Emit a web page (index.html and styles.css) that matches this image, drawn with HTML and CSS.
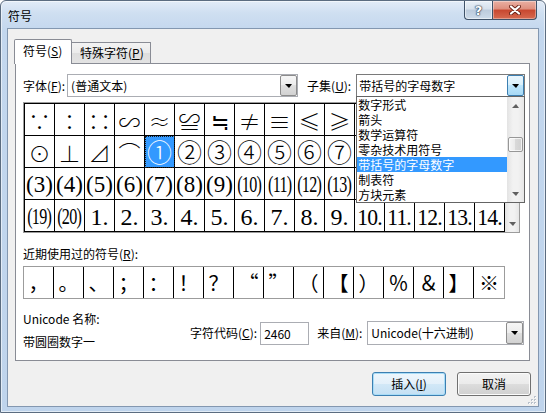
FILE: index.html
```html
<!DOCTYPE html>
<html lang="zh-CN">
<head>
<meta charset="utf-8">
<title>符号</title>
<link rel="stylesheet" href="styles.css">
</head>
<body>
<div class="window">
  <div class="titlebar">
    <span class="title">符号</span>
    <div class="tbtns">
      <div class="tbtn help">?</div>
      <div class="tbtn close">
        <svg width="12" height="10" viewBox="0 0 12 10"><path d="M2 1.5L10 8.5M10 1.5L2 8.5" stroke="#6b2418" stroke-width="4" stroke-linecap="round"/><path d="M2 1.5L10 8.5M10 1.5L2 8.5" stroke="#fff" stroke-width="2.2" stroke-linecap="round"/></svg>
      </div>
    </div>
  </div>
  <div class="client">
    <div class="tabs">
      <div class="tab active">符号(<u>S</u>)</div>
      <div class="tab">特殊字符(<u>P</u>)</div>
    </div>
    <div class="panel">
      <div class="row-font">
        <span class="lbl">字体(<u>F</u>):</span>
        <div class="combo font-combo"><span class="val">(普通文本)</span><span class="dd"><i class="tri"></i></span></div>
        <span class="lbl subset-lbl">子集(<u>U</u>):</span>
        <div class="combo subset-combo"><span class="val">带括号的字母数字</span><span class="dd hot"><i class="tri"></i></span>
          <div class="droplist">
            <div class="items">
              <div class="item">数字形式</div>
              <div class="item">箭头</div>
              <div class="item">数学运算符</div>
              <div class="item">零杂技术用符号</div>
              <div class="item sel">带括号的字母数字</div>
              <div class="item">制表符</div>
              <div class="item">方块元素</div>
            </div>
            <div class="vscroll list-scroll">
              <span class="arr"><i class="tri-up"></i></span>
              <span class="thumb"></span>
              <span class="spacer"></span>
              <span class="arr"><i class="tri-down"></i></span>
            </div>
          </div>
        </div>
      </div>
      <div class="grid">
        <div class="cells">
          <span class="cell">∵</span><span class="cell">∶</span><span class="cell">∷</span><span class="cell">∽</span><span class="cell">≈</span><span class="cell">≌</span><span class="cell">≒</span><span class="cell">≠</span><span class="cell">≡</span><span class="cell">≤</span><span class="cell">≥</span><span class="cell"></span><span class="cell"></span><span class="cell"></span><span class="cell"></span><span class="cell"></span>
          <span class="cell big">⊙</span><span class="cell big">⊥</span><span class="cell big">⊿</span><span class="cell big">⌒</span><span class="cell circ sel">①</span><span class="cell circ">②</span><span class="cell circ">③</span><span class="cell circ">④</span><span class="cell circ">⑤</span><span class="cell circ">⑥</span><span class="cell circ">⑦</span><span class="cell"></span><span class="cell"></span><span class="cell"></span><span class="cell"></span><span class="cell"></span>
          <span class="cell par">(3)</span><span class="cell par">(4)</span><span class="cell par">(5)</span><span class="cell par">(6)</span><span class="cell par">(7)</span><span class="cell par">(8)</span><span class="cell par">(9)</span><span class="cell par"><b class="sq">(10)</b></span><span class="cell par"><b class="sq">(11)</b></span><span class="cell par"><b class="sq">(12)</b></span><span class="cell par"><b class="sq">(13)</b></span><span class="cell"></span><span class="cell"></span><span class="cell"></span><span class="cell"></span><span class="cell"></span>
          <span class="cell par"><b class="sq">(19)</b></span><span class="cell par"><b class="sq">(20)</b></span><span class="cell num">1.</span><span class="cell num">2.</span><span class="cell num">3.</span><span class="cell num">4.</span><span class="cell num">5.</span><span class="cell num">6.</span><span class="cell num">7.</span><span class="cell num">8.</span><span class="cell num">9.</span><span class="cell num"><b class="sq2">10.</b></span><span class="cell num"><b class="sq2">11.</b></span><span class="cell num"><b class="sq2">12.</b></span><span class="cell num"><b class="sq2">13.</b></span><span class="cell num"><b class="sq2">14.</b></span>
        </div>
        <div class="vscroll grid-scroll">
          <span class="arr"><i class="tri-up"></i></span>
          <span class="spacer"></span>
          <span class="arr"><i class="tri-down"></i></span>
        </div>
      </div>
      <div class="recent-lbl">近期使用过的符号(<u>R</u>):</div>
      <div class="recent">
        <span class="rc">，</span><span class="rc">。</span><span class="rc">、</span><span class="rc">；</span><span class="rc">：</span><span class="rc">！</span><span class="rc">？</span><span class="rc">“</span><span class="rc">”</span><span class="rc">（</span><span class="rc">【</span><span class="rc">）</span><span class="rc">％</span><span class="rc">＆</span><span class="rc">】</span><span class="rc">※</span>
      </div>
      <div class="info">
        <div class="names">
          <div>Unicode 名称:</div>
          <div class="name2">带圆圈数字一</div>
        </div>
        <span class="lbl shift">字符代码(<u>C</u>):</span>
        <div class="input shift">2460</div>
        <span class="lbl from-lbl shift">来自(<u>M</u>):</span>
        <div class="combo from-combo shift"><span class="val">Unicode(十六进制)</span><span class="dd"><i class="tri"></i></span></div>
      </div>
    </div>
    <div class="buttons">
      <div class="btn default">插入(<u>I</u>)</div>
      <div class="btn">取消</div>
    </div>
    <svg class="grip" width="11" height="11" viewBox="0 0 11 11">
      <g fill="#b9c1cb"><rect x="8" y="2" width="2" height="2"/><rect x="5" y="5" width="2" height="2"/><rect x="8" y="5" width="2" height="2"/><rect x="2" y="8" width="2" height="2"/><rect x="5" y="8" width="2" height="2"/><rect x="8" y="8" width="2" height="2"/></g>
      <g fill="#fff"><rect x="9" y="3" width="1" height="1"/><rect x="6" y="6" width="1" height="1"/><rect x="9" y="6" width="1" height="1"/><rect x="3" y="9" width="1" height="1"/><rect x="6" y="9" width="1" height="1"/><rect x="9" y="9" width="1" height="1"/></g>
    </svg>
  </div>
</div>
</body>
</html>
```
FILE: styles.css
```css
* { box-sizing: border-box; }
html, body { margin: 0; padding: 0; }
body {
  width: 546px; height: 413px; overflow: hidden;
  font-family: "Noto Sans CJK SC", "Noto Sans", sans-serif;
  font-size: 12px; line-height: 16px; color: #000; background: #fff;
}
u { text-decoration: underline; text-underline-offset: 1px; }
b { font-weight: normal; }

.window {
  width: 546px; height: 413px;
  border: 1px solid #5b6c80; border-radius: 6px 6px 0 0;
  background: linear-gradient(180deg, #e2ecf7 0, #cfdff1 12px, #c3d7ee 30px, #bfd4ec 100%);
  display: flex; flex-direction: column; overflow: hidden;
  box-shadow: inset 0 0 0 1px rgba(255,255,255,0.55);
}
.titlebar {
  height: 27px; flex: none;
  display: flex; justify-content: space-between; align-items: flex-start;
  padding: 0 8px 0 7px;
}
.title { margin-top: 7px; line-height: 16px; }
.tbtns { display: flex; }
.tbtn {
  height: 19px; border: 1px solid #3f5268; border-top: none;
  display: flex; align-items: center; justify-content: center;
}
.help {
  width: 28px; border-right: none; border-radius: 0 0 0 4px;
  background: linear-gradient(180deg, #e9f0f7 0, #d6e1ec 45%, #bccbdc 50%, #cddbe9 100%);
  color: #fff; font: bold 13px/1 "DejaVu Sans", sans-serif;
  text-shadow: 0 0 1px #23374f, 0 0 1px #23374f, 0 0 2px #23374f;
  box-shadow: inset 0 0 0 1px rgba(255,255,255,0.5);
}
.close {
  width: 45px; border-radius: 0 0 4px 0;
  background: linear-gradient(180deg, #eab0a3 0, #de8e7d 45%, #c8472f 50%, #d66a50 100%);
  box-shadow: inset 0 0 0 1px rgba(255,255,255,0.35);
}

.client {
  flex: 1; margin: 0 6px 5px; position: relative;
  border: 1px solid #8397b0; background: #f0f0f0;
}
.tabs { display: flex; align-items: flex-start; margin-top: 10px; padding-left: 6px; height: 24px; }
.tab {
  height: 21px; margin-top: 3px; padding: 0 0 0 8px; width: 79px;
  border: 1px solid #898c95; border-bottom: none; border-left: none;
  background: linear-gradient(180deg, #f3f3f3 0, #ebebeb 50%, #dedede 50%, #e3e3e3 100%);
  line-height: 19px; white-space: nowrap;
}
.tab.active {
  width: 58px; height: 25px; margin-top: 0; padding-left: 8px;
  border-left: 1px solid #898c95; border-radius: 2px 2px 0 0;
  background: #fff; position: relative; z-index: 1; line-height: 22px;
}
.panel {
  margin-left: 7px; width: 515px; height: 298px;
  border: 1px solid #898c95; background: #fff;
  padding: 10px 0 0 7px;
}
.row-font { display: flex; align-items: center; height: 23px; }
.lbl { flex: none; white-space: nowrap; }
.combo {
  position: relative; display: flex; height: 23px; flex: none;
  border: 1px solid #abadb3; background: #fff;
}
.combo .val { flex: 1; padding-left: 3px; line-height: 21px; white-space: nowrap; overflow: hidden; }
.combo .dd {
  width: 17px; flex: none; border: 1px solid #8c8c8c; border-radius: 2px;
  background: linear-gradient(180deg, #f6f6f6 0, #ececec 50%, #dfdfdf 50%, #d2d2d2 100%);
  display: flex; align-items: center; justify-content: center;
}
.combo .dd.hot {
  border-color: #3c7fb1;
  background: linear-gradient(180deg, #eaf6fd 0, #d9f0fc 50%, #bee6fd 50%, #a7d9f5 100%);
}
.tri { width: 0; height: 0; border-left: 4px solid transparent; border-right: 3px solid transparent; border-top: 4px solid #000; }
.font-combo { margin-left: 2px; width: 231px; }
.subset-lbl { margin-left: 9px; }
.subset-combo { margin-left: 5px; width: 169px; border-color: #7a7a7a; }
.subset-combo .val { padding-left: 2px; }

.droplist {
  position: absolute; top: 100%; left: -1px; width: 169px; height: 107px;
  border: 1px solid #646464; background: #fff; display: flex; z-index: 5;
}
.items { flex: 1; }
.item { height: 15px; line-height: 15px; padding-left: 1px; white-space: nowrap; overflow: hidden; }
.item.sel { background: #3399ff; color: #fff; }

.vscroll {
  flex: none; display: flex; flex-direction: column; align-items: center;
  background: linear-gradient(90deg, #e3e3e3 0, #f2f2f2 35%, #f2f2f2 65%, #e6e6e6 100%);
}
.list-scroll { width: 17px; }
.grid-scroll { width: 14px; }
.vscroll .arr { height: 17px; width: 100%; display: flex; align-items: center; justify-content: center; flex: none; }
.vscroll .spacer { flex: 1; }
.tri-up { width: 0; height: 0; border-left: 4px solid transparent; border-right: 3px solid transparent; border-bottom: 4px solid #606060; }
.tri-down { width: 0; height: 0; border-left: 4px solid transparent; border-right: 3px solid transparent; border-top: 4px solid #606060; }
.thumb {
  margin-top: 23px; width: 15px; height: 15px; flex: none;
  border: 1px solid #979797; border-radius: 2px;
  background: linear-gradient(90deg, #f6f6f6 0, #e9e9e9 50%, #d9d9d9 50%, #d0d0d0 100%);
  box-shadow: inset 0 0 0 1px rgba(255,255,255,0.7);
}

.grid { display: flex; width: 497px; margin-top: 5px; border: 1px solid #9c9c9c; }
.cells {
  display: grid; grid-template-columns: repeat(16, 30px); grid-auto-rows: 32px;
  border-left: 1px solid #000; border-top: 1px solid #000;
}
.cell {
  border-right: 1px solid #000; border-bottom: 1px solid #000;
  display: flex; align-items: center; justify-content: center;
  font-family: "Noto Sans CJK SC", "DejaVu Sans", sans-serif; font-size: 22px; line-height: 1;
  font-weight: 300;
}
.cell.big { font-size: 22px; }
.cell.circ { font-size: 25px; line-height: 25px; }
.cell.sel { background: #3399ff; color: #fff; outline: 1px dotted #1a1a1a; outline-offset: -1px; }
.cell.par { font-family: "Liberation Serif", serif; font-size: 23px; padding-top: 1px; font-weight: normal; }
.cell.num { font-family: "Liberation Serif", serif; font-size: 24px; padding-top: 2px; font-weight: normal; }
.sq { display: inline-block; transform: scaleX(0.7); white-space: nowrap; letter-spacing: -1px; }
.sq2 { display: inline-block; transform: scaleX(0.9); white-space: nowrap; letter-spacing: -1px; }

.recent-lbl { margin-top: 13px; }
.recent {
  display: grid; grid-template-columns: repeat(16, 30px); width: 482px; height: 33px;
  margin-top: 4px; border: 1px solid #9c9c9c;
}
.rc {
  border-right: 1px solid #000; display: flex; align-items: center; justify-content: center;
  font-family: "Noto Sans CJK SC", sans-serif; font-size: 20px; line-height: 1;
}
.rc:last-child { border-right: none; }

.info { display: flex; align-items: center; margin-top: 12px; }
.names { width: 167px; flex: none; }
.name2 { margin-top: 7px; }
.shift { margin-top: 5px; }
.input {
  width: 49px; height: 23px; margin-left: 3px; flex: none;
  border: 1px solid #abadb3; background: #fff; padding-left: 3px; line-height: 21px;
}
.from-lbl { margin-left: 8px; }
.from-combo { margin-left: 5px; width: 157px; height: 24px; }
.from-combo .val { line-height: 22px; }

.buttons { display: flex; justify-content: flex-end; gap: 11px; margin-top: 11px; padding-right: 7px; }
.btn {
  width: 74px; height: 24px; border: 1px solid #707070; border-radius: 3px;
  background: linear-gradient(180deg, #f2f2f2 0, #ebebeb 50%, #dddddd 50%, #cfcfcf 100%);
  box-shadow: inset 0 0 0 1px #fbfbfb;
  display: flex; align-items: center; justify-content: center; line-height: 16px;
}
.btn.default {
  border-color: #3c7fb1;
  background: linear-gradient(180deg, #eef6fc 0, #e3f0fa 50%, #d2e8f7 50%, #c4e0f4 100%);
  box-shadow: inset 0 0 0 1px #a8dcf7;
}
.grip { position: absolute; right: 1px; bottom: 1px; }
```
